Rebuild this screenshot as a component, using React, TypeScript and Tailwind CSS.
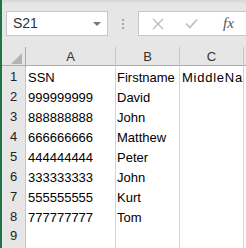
import React from 'react';

const rows: [string, string][] = [
  ['SSN', 'Firstname'],
  ['999999999', 'David'],
  ['888888888', 'John'],
  ['666666666', 'Matthew'],
  ['444444444', 'Peter'],
  ['333333333', 'John'],
  ['555555555', 'Kurt'],
  ['777777777', 'Tom'],
  ['', ''],
];

const cols = 'grid grid-cols-[24px_90px_64px_64px_40px]';

export default function App() {
  return (
    <div className="w-[246px] h-[248px] overflow-hidden bg-[#e6e6e6] border-l-2 border-[#217346] font-['Liberation_Sans',Arial,sans-serif] text-[13px]">
      {/* formula bar */}
      <div className="h-[47px] bg-gradient-to-b from-[#d4d4d4] via-[#e6e6e6] via-[8%] to-[#e6e6e6] pt-[11px]">
        <div className="flex items-start">
          <div className="ml-[4px] w-[102px] h-[25px] bg-white border border-[#c6c6c6] flex items-center justify-between pl-[6px] pr-[6px]">
            <span className="text-[#333] text-[14px]">S21</span>
            <span className="w-0 h-0 border-l-[4px] border-r-[4px] border-t-[4px] border-l-transparent border-r-transparent border-t-[#777]" />
          </div>
          <div className="ml-[14px] mt-[8px] flex flex-col gap-[2px]">
            <span className="w-[2px] h-[2px] bg-[#a6a6a6]" />
            <span className="w-[2px] h-[2px] bg-[#a6a6a6]" />
            <span className="w-[2px] h-[2px] bg-[#a6a6a6]" />
          </div>
          <div className="ml-[14px] flex-1 h-[25px] bg-white border border-[#c6c6c6] border-r-0 flex items-center">
            <svg width="12" height="12" viewBox="0 0 12 12" className="ml-[13px]">
              <path d="M1 1L11 11M11 1L1 11" stroke="#bdbdbd" strokeWidth="1.4" fill="none" />
            </svg>
            <svg width="13" height="11" viewBox="0 0 13 11" className="ml-[21px]">
              <path d="M1 5.5L4.8 9.5L12 1.5" stroke="#bdbdbd" strokeWidth="1.6" fill="none" />
            </svg>
            <span className="ml-[25px] italic text-[#555] text-[15px] font-['Liberation_Serif',serif]">fx</span>
          </div>
        </div>
      </div>

      {/* column headers */}
      <div className={`${cols} h-[19px] bg-[#e6e6e6] border-b border-[#ababab] text-[#333]`}>
        <div className="border-r border-[#ababab] relative">
          <span className="absolute right-[3px] bottom-[3px] w-0 h-0 border-l-[11px] border-b-[11px] border-l-transparent border-b-[#b4b4b4]" />
        </div>
        {['A', 'B', 'C', ''].map((c, i) => (
          <div key={i} className="border-r border-[#c6c6c6] flex items-center justify-center">
            {c}
          </div>
        ))}
      </div>

      {/* rows */}
      {rows.map((r, i) => (
        <div key={i} className={`${cols} h-[20px]`}>
          <div className="border-r border-b border-[#c6c6c6] flex items-center justify-center text-[#222] bg-[#e6e6e6]">
            {i + 1}
          </div>
          <div className="bg-white border-r border-b border-[#d4d4d4] pl-[2px] flex items-center pt-[2px] text-black overflow-hidden whitespace-nowrap">
            {r[0]}
          </div>
          <div className="bg-white border-r border-b border-[#d4d4d4] pl-[1px] flex items-center pt-[2px] text-black whitespace-nowrap">
            {r[1]}
          </div>
          <div className="bg-white border-r border-b border-[#d4d4d4] pl-[2px] flex items-center pt-[2px] text-black overflow-hidden whitespace-nowrap tracking-[0.75px]">
            {i === 0 ? 'MiddleName' : ''}
          </div>
          <div className="bg-white border-r border-b border-[#d4d4d4]" />
        </div>
      ))}
      {/* row 10, just its top edge shows */}
      <div className={`${cols} h-[20px]`}>
        <div className="border-r border-[#c6c6c6] bg-[#e6e6e6]" />
        <div className="bg-white border-r border-[#d4d4d4]" />
        <div className="bg-white border-r border-[#d4d4d4]" />
        <div className="bg-white border-r border-[#d4d4d4]" />
        <div className="bg-white border-r border-[#d4d4d4]" />
      </div>
    </div>
  );
}
